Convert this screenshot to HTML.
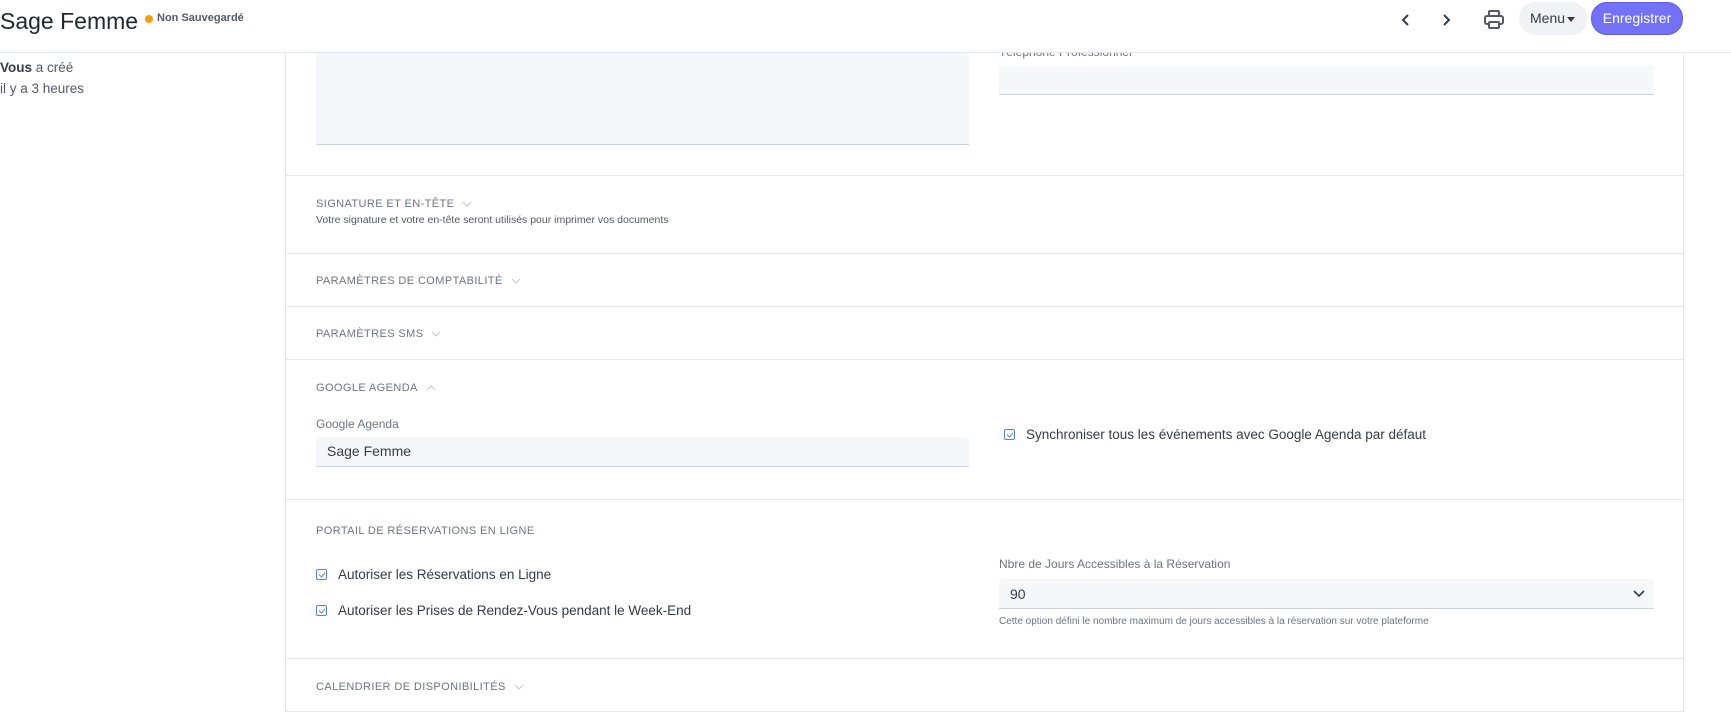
<!DOCTYPE html>
<html><head><meta charset="utf-8"><style>
*{box-sizing:border-box;margin:0;padding:0}
body{width:1731px;height:727px;overflow:hidden;background:#fff;font-family:"Liberation Sans",sans-serif;color:#333c48;position:relative}
.a{position:absolute;white-space:nowrap}
.hdr{position:absolute;left:0;top:0;width:1731px;height:53px;border-bottom:1px solid #e3e6ea;background:#fff;z-index:5}
.card{position:absolute;left:285px;top:53px;width:1399px;height:659px;border:1px solid #e3e6ea;border-top:none;overflow:hidden}
.sep{position:absolute;left:0;width:100%;height:1px;background:#e3e6ea}
.h{position:absolute;font-size:11px;letter-spacing:.4px;color:#6b7583;white-space:nowrap}
.h svg{vertical-align:middle;margin-left:8px}
.in{position:absolute;background:#f6f7fb;border-bottom:1px solid #cfd4db;border-radius:3px 3px 0 0}
.lbl{position:absolute;font-size:12px;color:#6b7583;white-space:nowrap}
.cb{position:absolute;font-size:13.5px;color:#333c48;white-space:nowrap}
.cb i{display:inline-block;width:11px;height:11px;border:1px solid #5b7fe0;border-radius:2px;margin-right:11px;vertical-align:-1px;position:relative}
.cb i:after{content:"";position:absolute;left:3px;top:1px;width:3px;height:5px;border:solid #5b7fe0;border-width:0 1px 1px 0;transform:rotate(40deg)}
</style></head><body>
<div class="hdr">
 <div class="a" style="left:0;top:8px;font-size:23px;color:#1f272e">Sage Femme</div>
 <div class="a" style="left:145px;top:15px;width:8px;height:8px;border-radius:50%;background:#f59e0b"></div>
 <div class="a" style="left:157px;top:12px;font-size:11px;font-weight:bold;color:#525a66">Non Sauvegardé</div>
 <svg class="a" style="left:1400px;top:12px" width="12" height="16" viewBox="0 0 12 16"><path d="M8 3L3 8l5 5" fill="none" stroke="#333c48" stroke-width="2"/></svg>
 <svg class="a" style="left:1440px;top:12px" width="12" height="16" viewBox="0 0 12 16"><path d="M4 3l5 5-5 5" fill="none" stroke="#333c48" stroke-width="2"/></svg>
 <svg class="a" style="left:1483px;top:9px" width="22" height="22" viewBox="0 0 22 22" fill="none" stroke="#525a66" stroke-width="2"><rect x="6" y="2" width="10" height="5" rx="1"/><rect x="2" y="7" width="18" height="8" rx="2"/><rect x="6" y="13" width="10" height="6" rx="1" fill="#fff"/></svg>
 <div class="a" style="left:1519px;top:2px;width:68px;height:33px;border-radius:16px;background:#f0f2f5;font-size:14px;line-height:33px;padding-left:11px;color:#333c48">Menu <span style="display:inline-block;border:4px solid transparent;border-top:5px solid #333c48;vertical-align:-3px;margin-left:-2px"></span></div>
 <div class="a" style="left:1591px;top:2px;width:92px;height:33px;border-radius:16px;background:#7372f7;border:1px solid #5e5cf0;color:#fff;font-size:14px;line-height:31px;text-align:center">Enregistrer</div>
</div>
<div class="a" style="left:0;top:60px;font-size:13.5px;color:#525a66"><b style="color:#333c48">Vous</b> a créé</div>
<div class="a" style="left:0;top:81px;font-size:13.5px;color:#525a66">il y a 3 heures</div>

<div class="card">
 <div class="in" style="left:30px;top:0;width:653px;height:92px"></div>
 <div class="lbl" style="left:713px;top:-8px">Téléphone Professionnel</div>
 <div class="in" style="left:713px;top:13px;width:655px;height:29px"></div>

 <div class="sep" style="top:122px"></div>
 <div class="h" style="left:30px;top:145px">SIGNATURE ET EN-TÊTE<svg width="10" height="6" viewBox="0 0 10 6"><path d="M1 1l4 4 4-4" fill="none" stroke="#c3c9d1"/></svg></div>
 <div class="lbl" style="left:30px;top:161px;font-size:10.5px;color:#525a66">Votre signature et votre en-tête seront utilisés pour imprimer vos documents</div>
 <div class="sep" style="top:200px"></div>
 <div class="h" style="left:30px;top:222px">PARAMÈTRES DE COMPTABILITÉ<svg width="10" height="6" viewBox="0 0 10 6"><path d="M1 1l4 4 4-4" fill="none" stroke="#c3c9d1"/></svg></div>
 <div class="sep" style="top:253px"></div>
 <div class="h" style="left:30px;top:275px">PARAMÈTRES SMS<svg width="10" height="6" viewBox="0 0 10 6"><path d="M1 1l4 4 4-4" fill="none" stroke="#c3c9d1"/></svg></div>
 <div class="sep" style="top:306px"></div>
 <div class="h" style="left:30px;top:329px">GOOGLE AGENDA<svg width="10" height="6" viewBox="0 0 10 6"><path d="M1 5l4-4 4 4" fill="none" stroke="#c3c9d1"/></svg></div>
 <div class="lbl" style="left:30px;top:364px">Google Agenda</div>
 <div class="in" style="left:30px;top:384px;width:653px;height:30px"></div>
 <div class="a" style="left:41px;top:390px;font-size:14px;color:#333c48">Sage Femme</div>
 <div class="cb" style="left:718px;top:374px"><i></i>Synchroniser tous les événements avec Google Agenda par défaut</div>
 <div class="sep" style="top:446px"></div>
 <div class="h" style="left:30px;top:472px">PORTAIL DE RÉSERVATIONS EN LIGNE</div>
 <div class="cb" style="left:30px;top:514px"><i></i>Autoriser les Réservations en Ligne</div>
 <div class="cb" style="left:30px;top:550px"><i></i>Autoriser les Prises de Rendez-Vous pendant le Week-End</div>
 <div class="lbl" style="left:713px;top:504px">Nbre de Jours Accessibles à la Réservation</div>
 <div class="in" style="left:713px;top:526px;width:655px;height:30px"></div>
 <div class="a" style="left:724px;top:533px;font-size:14px">90</div>
 <svg class="a" style="left:1347px;top:537px" width="12" height="8" viewBox="0 0 12 8"><path d="M1 1l5 5 5-5" fill="none" stroke="#333c48" stroke-width="1.6"/></svg>
 <div class="lbl" style="left:713px;top:563px;font-size:10px;color:#6b7583">Cette option défini le nombre maximum de jours accessibles à la réservation sur votre plateforme</div>
 <div class="sep" style="top:605px"></div>
 <div class="h" style="left:30px;top:628px">CALENDRIER DE DISPONIBILITÉS<svg width="10" height="6" viewBox="0 0 10 6"><path d="M1 1l4 4 4-4" fill="none" stroke="#c3c9d1"/></svg></div>
 <div class="sep" style="top:658px"></div>
</div>
</body></html>
